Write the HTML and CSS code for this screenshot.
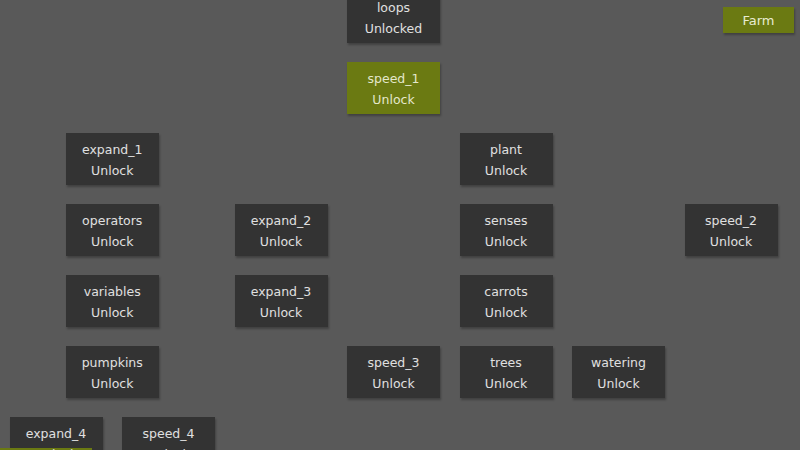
FILE: index.html
```html
<!DOCTYPE html>
<html>
<head>
<meta charset="utf-8">
<link rel="stylesheet" href="styles.css">
</head>
<body>
<div class="tree">
  <div class="node c7 r1"><span class="name">loops</span><span class="state">Unlocked</span></div>
  <div class="node c7 r2 green"><span class="name">speed_1</span><span class="state">Unlock</span></div>
  <div class="node c2 r3"><span class="name">expand_1</span><span class="state">Unlock</span></div>
  <div class="node c9 r3"><span class="name">plant</span><span class="state">Unlock</span></div>
  <div class="node c2 r4"><span class="name">operators</span><span class="state">Unlock</span></div>
  <div class="node c5 r4"><span class="name">expand_2</span><span class="state">Unlock</span></div>
  <div class="node c9 r4"><span class="name">senses</span><span class="state">Unlock</span></div>
  <div class="node c13 r4"><span class="name">speed_2</span><span class="state">Unlock</span></div>
  <div class="node c2 r5"><span class="name">variables</span><span class="state">Unlock</span></div>
  <div class="node c5 r5"><span class="name">expand_3</span><span class="state">Unlock</span></div>
  <div class="node c9 r5"><span class="name">carrots</span><span class="state">Unlock</span></div>
  <div class="node c2 r6"><span class="name">pumpkins</span><span class="state">Unlock</span></div>
  <div class="node c7 r6"><span class="name">speed_3</span><span class="state">Unlock</span></div>
  <div class="node c9 r6"><span class="name">trees</span><span class="state">Unlock</span></div>
  <div class="node c11 r6"><span class="name">watering</span><span class="state">Unlock</span></div>
  <div class="node c1 r7"><span class="name">expand_4</span><span class="state">Unlock</span></div>
  <div class="node c3 r7"><span class="name">speed_4</span><span class="state">Unlock</span></div>
</div>
<div class="hover-strip"></div>
<button class="farm">Farm</button>
</body>
</html>
```
FILE: styles.css
```css
html, body {
  margin: 0;
  padding: 0;
  width: 800px;
  height: 450px;
  overflow: hidden;
  background: #595959;
  font-family: "DejaVu Sans", sans-serif;
}
.tree {
  display: grid;
  grid-template-columns: repeat(14, 56.25px);
  grid-auto-rows: 71px;
  padding-left: 9.5px;
  margin-top: -9px;
}
.node {
  box-sizing: border-box;
  grid-column-end: span 2;
  width: 93px;
  height: 52px;
  padding-top: 2px;
  background: #333333;
  box-shadow: 1px 2px 2px rgba(0,0,0,0.28);
  color: #e0e0e0;
  display: flex;
  flex-direction: column;
  align-items: center;
  justify-content: center;
  gap: 5px;
  font-size: 12.5px;
  line-height: 16px;
}
.node.green {
  background: #6b7a12;
  color: #e4e8cc;
}
.state { position: relative; z-index: 2; }
.c1 { grid-column-start: 1; }
.c2 { grid-column-start: 2; }
.c3 { grid-column-start: 3; }
.c5 { grid-column-start: 5; }
.c7 { grid-column-start: 7; }
.c9 { grid-column-start: 9; }
.c11 { grid-column-start: 11; }
.c13 { grid-column-start: 13; }
.r1 { grid-row-start: 1; }
.r2 { grid-row-start: 2; }
.r3 { grid-row-start: 3; }
.r4 { grid-row-start: 4; }
.r5 { grid-row-start: 5; }
.r6 { grid-row-start: 6; }
.r7 { grid-row-start: 7; }
.hover-strip {
  position: absolute;
  left: 0;
  top: 448px;
  width: 92px;
  height: 4px;
  background: #6b7a12;
  z-index: 1;
}
.farm {
  position: absolute;
  left: 723px;
  top: 7px;
  width: 71px;
  height: 26px;
  border: none;
  padding: 0;
  background: #6b7a12;
  color: #e8ecd2;
  font-family: "DejaVu Sans", sans-serif;
  font-size: 13px;
  box-shadow: 1px 2px 2px rgba(0,0,0,0.28);
}
```
